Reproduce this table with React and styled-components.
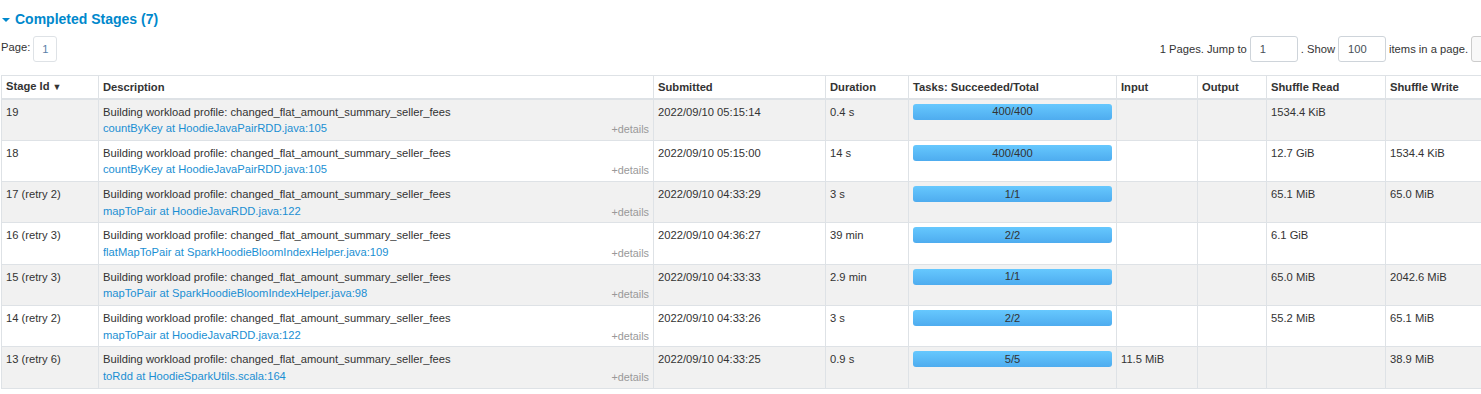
import React from "react";
import styled, { createGlobalStyle } from "styled-components";

const GlobalStyle = createGlobalStyle`
  html, body {
    margin: 0;
    padding: 0;
    background: #fff;
    overflow: hidden;
  }
  body {
    font-family: "Liberation Sans", Arial, sans-serif;
    font-size: 11.2px;
    color: #333;
  }
`;

const Page = styled.div`
  width: 1500px;
  padding-left: 1px;
`;

const Heading = styled.h4`
  display: flex;
  align-items: center;
  gap: 5px;
  margin: 0;
  padding: 10px 0 0 1px;
  height: 18px;
  font-size: 14px;
  font-weight: bold;
  color: #0088cc;
`;

const Caret = styled.span`
  width: 0;
  height: 0;
  border-left: 4px solid transparent;
  border-right: 4px solid transparent;
  border-top: 4px solid #0088cc;
  margin-top: 1px;
`;

const PagerRow = styled.div`
  display: flex;
  justify-content: space-between;
  align-items: center;
  margin-top: 8px;
  height: 26px;
`;

const PagerGroup = styled.div`
  display: flex;
  align-items: center;
  gap: ${(p) => p.$gap || 3}px;
`;

const PageLabel = styled.span`
  margin-top: -4px;
`;

const PageBox = styled.span`
  box-sizing: border-box;
  width: 24px;
  height: 26px;
  display: flex;
  align-items: center;
  justify-content: center;
  border: 1px solid #dee2e6;
  border-radius: 3px;
  color: #5a7fa8;
`;

const Input = styled.span`
  box-sizing: border-box;
  width: 48px;
  height: 26px;
  display: flex;
  align-items: center;
  padding-left: 9px;
  border: 1px solid #ced4da;
  border-radius: 3px;
  color: #495057;
`;

const GoButton = styled.span`
  box-sizing: border-box;
  width: 30px;
  height: 26px;
  border: 1px solid #ccc;
  border-radius: 3px;
  background: #f8f8f8;
`;

const Table = styled.table`
  margin-top: 13px;
  width: 1500px;
  border-collapse: collapse;
  table-layout: fixed;
  line-height: 16.6px;
`;

const Th = styled.th`
  text-align: left;
  font-weight: bold;
  padding: 2px 4px 2px;
  border: 1px solid #dee2e6;
  border-bottom-width: 2px;
  white-space: nowrap;
  height: 16px;
`;

const Row = styled.tr`
  background: ${(p) => (p.$odd ? "#f1f1f1" : "#fff")};
`;

const Td = styled.td`
  vertical-align: top;
  padding: 4px 4px 2.1px;
  border: 1px solid #dee2e6;
  white-space: nowrap;
  height: 33px;
`;

const Link = styled.a`
  color: #1a8fd3;
  text-decoration: none;
`;

const Details = styled.span`
  float: right;
  font-size: 10.8px;
  color: #999;
  margin-top: 1px;
`;

const Progress = styled.div`
  height: 16px;
  border-radius: 3px;
  background: linear-gradient(to bottom, #66c8fe, #4eacef);
  display: flex;
  align-items: center;
  justify-content: center;
  color: #333;
`;

const SortArrow = styled.span`
  font-size: 9px;
  margin-left: 3px;
`;

const cols = [97, 555, 172, 83, 208, 81, 69, 119, 116];

const stages = [
  { id: "19", link: "countByKey at HoodieJavaPairRDD.java:105", sub: "2022/09/10 05:15:14", dur: "0.4 s", tasks: "400/400", input: "", output: "", read: "1534.4 KiB", write: "" },
  { id: "18", link: "countByKey at HoodieJavaPairRDD.java:105", sub: "2022/09/10 05:15:00", dur: "14 s", tasks: "400/400", input: "", output: "", read: "12.7 GiB", write: "1534.4 KiB" },
  { id: "17 (retry 2)", link: "mapToPair at HoodieJavaRDD.java:122", sub: "2022/09/10 04:33:29", dur: "3 s", tasks: "1/1", input: "", output: "", read: "65.1 MiB", write: "65.0 MiB" },
  { id: "16 (retry 3)", link: "flatMapToPair at SparkHoodieBloomIndexHelper.java:109", sub: "2022/09/10 04:36:27", dur: "39 min", tasks: "2/2", input: "", output: "", read: "6.1 GiB", write: "" },
  { id: "15 (retry 3)", link: "mapToPair at SparkHoodieBloomIndexHelper.java:98", sub: "2022/09/10 04:33:33", dur: "2.9 min", tasks: "1/1", input: "", output: "", read: "65.0 MiB", write: "2042.6 MiB" },
  { id: "14 (retry 2)", link: "mapToPair at HoodieJavaRDD.java:122", sub: "2022/09/10 04:33:26", dur: "3 s", tasks: "2/2", input: "", output: "", read: "55.2 MiB", write: "65.1 MiB" },
  { id: "13 (retry 6)", link: "toRdd at HoodieSparkUtils.scala:164", sub: "2022/09/10 04:33:25", dur: "0.9 s", tasks: "5/5", input: "11.5 MiB", output: "", read: "", write: "38.9 MiB" },
];

const headers = ["Stage Id", "Description", "Submitted", "Duration", "Tasks: Succeeded/Total", "Input", "Output", "Shuffle Read", "Shuffle Write"];

export default function App() {
  return (
    <Page>
      <GlobalStyle />
      <Heading>
        <Caret />
        Completed Stages (7)
      </Heading>
      <PagerRow>
        <PagerGroup $gap={3}>
          <PageLabel>Page:</PageLabel>
          <PageBox>1</PageBox>
        </PagerGroup>
        <PagerGroup $gap={3}>
          <span>1 Pages. Jump to</span>
          <Input>1</Input>
          <span>. Show</span>
          <Input>100</Input>
          <span>items in a page.</span>
          <GoButton />
        </PagerGroup>
      </PagerRow>
      <Table>
        <colgroup>
          {cols.map((w, i) => (
            <col key={i} style={{ width: w }} />
          ))}
        </colgroup>
        <thead>
          <tr>
            {headers.map((h, i) => (
              <Th key={h}>
                {h}
                {i === 0 && <SortArrow>▼</SortArrow>}
              </Th>
            ))}
          </tr>
        </thead>
        <tbody>
          {stages.map((s, i) => (
            <Row key={s.id} $odd={i % 2 === 0}>
              <Td>{s.id}</Td>
              <Td>
                <div>Building workload profile: changed_flat_amount_summary_seller_fees</div>
                <div>
                  <Link href="#">{s.link}</Link>
                  <Details>+details</Details>
                </div>
              </Td>
              <Td>{s.sub}</Td>
              <Td>{s.dur}</Td>
              <Td>
                <Progress>{s.tasks}</Progress>
              </Td>
              <Td>{s.input}</Td>
              <Td>{s.output}</Td>
              <Td>{s.read}</Td>
              <Td>{s.write}</Td>
            </Row>
          ))}
        </tbody>
      </Table>
    </Page>
  );
}
